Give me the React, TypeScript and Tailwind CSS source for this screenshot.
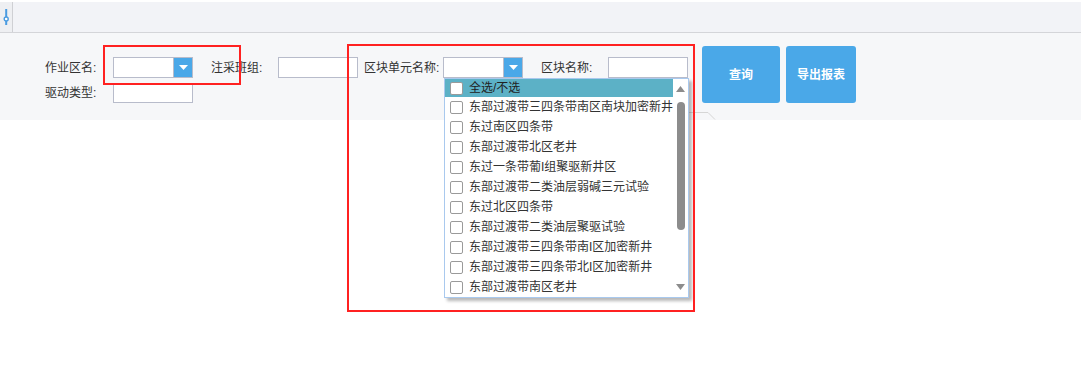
import React from "react";

const items = [
  "东部过渡带三四条带南区南块加密新井",
  "东过南区四条带",
  "东部过渡带北区老井",
  "东过一条带葡I组聚驱新井区",
  "东部过渡带二类油层弱碱三元试验",
  "东过北区四条带",
  "东部过渡带二类油层聚驱试验",
  "东部过渡带三四条带南I区加密新井",
  "东部过渡带三四条带北I区加密新井",
  "东部过渡带南区老井",
];

function Arrow() {
  return (
    <div className="w-[19px] h-full bg-[#4aa8e8] border-l border-[#b8bccb] flex items-center justify-center">
      <svg width="9" height="5" viewBox="0 0 9 5">
        <path d="M0 0 L9 0 L4.5 5 Z" fill="#fff" />
      </svg>
    </div>
  );
}

function Select() {
  return (
    <div className="w-[80px] h-[21px] border border-[#b8bccb] bg-white flex justify-end">
      <Arrow />
    </div>
  );
}

function Input() {
  return <div className="w-[80px] h-[21px] border border-[#b8bccb] bg-white" />;
}

function Checkbox() {
  return <div className="w-[13px] h-[13px] border border-[#9a9a9a] rounded-[2px] bg-white shrink-0" />;
}

export default function App() {
  return (
    <div className="relative w-[1081px] h-[371px] bg-white text-[12px] text-[#333] font-['Liberation_Sans','Noto_Sans_CJK_SC',sans-serif] overflow-hidden">
      {/* toolbar */}
      <div className="h-[33px] pt-[2px] bg-white">
        <div className="h-[31px] flex bg-[#f2f3f7] border-b border-[#d4d5d9]">
          <div className="w-[13px] h-full bg-[#eeeff2] border-r border-[#cfd0d4] flex items-center justify-center">
            <svg width="6" height="16" viewBox="0 0 6 16">
              <rect x="2.2" y="0" width="2" height="16" fill="#4a9be0" />
              <circle cx="3.2" cy="10" r="2" fill="#fff" stroke="#4a9be0" strokeWidth="1.4" />
            </svg>
          </div>
          <div className="flex-1" />
        </div>
      </div>

      {/* form */}
      <div className="h-[87px] bg-[#f6f7f9] pt-[13px] pl-[45px] flex items-start">
        <div className="pt-[11px] flex flex-col gap-[5px]">
          <div className="flex items-center h-[21px]">
            <span className="w-[68px]">作业区名:</span>
            <Select />
            <span className="ml-[18px] w-[67px]">注采班组:</span>
            <Input />
            <span className="ml-[6px] w-[79px]">区块单元名称:</span>
            <Select />
            <span className="ml-[18px] w-[67px]">区块名称:</span>
            <Input />
          </div>
          <div className="flex items-center h-[20px]">
            <span className="w-[68px]">驱动类型:</span>
            <div className="w-[80px] h-[20px] border border-[#b8bccb] bg-white" />
          </div>
        </div>
        <div className="ml-[14px] flex gap-[6px]">
          <button className="w-[78px] h-[57px] bg-[#4aa8e8] rounded-[3px] text-white font-bold text-[12px]">
            查询
          </button>
          <button className="w-[70px] h-[57px] bg-[#4aa8e8] rounded-[3px] text-white font-bold text-[12px]">
            导出报表
          </button>
        </div>
      </div>

      {/* faint tab shape behind dropdown */}
      <svg className="absolute left-[686px] top-[111px]" width="32" height="10" viewBox="0 0 32 10">
        <path d="M0 1.5 L22 1.5 L29 8.5" stroke="#d6d6d6" strokeWidth="1" fill="none" />
      </svg>

      {/* dropdown */}
      <div className="absolute left-[444px] top-[78px] w-[245px] h-[220px] bg-white border border-[#a9c9ee] shadow-[3px_3px_3px_rgba(0,0,0,0.28)] flex">
        <div className="flex-1 flex flex-col">
          <div className="h-[18px] bg-[#5cb1c6] flex items-center pl-[5px] gap-[6px] text-[#222]">
            <Checkbox />
            <span>全选/不选</span>
          </div>
          {items.map((t) => (
            <div key={t} className="h-[20px] flex items-center pl-[5px] gap-[6px] whitespace-nowrap">
              <Checkbox />
              <span>{t}</span>
            </div>
          ))}
        </div>
        <div className="w-[15px] relative">
          <svg className="absolute left-[3px] top-[7px]" width="9" height="6" viewBox="0 0 9 6">
            <path d="M0 6 L9 6 L4.5 0 Z" fill="#8c8c8c" />
          </svg>
          <div className="absolute left-[4px] top-[23px] w-[8px] h-[128px] rounded-[4px] bg-[#8c8c8c]" />
          <svg className="absolute left-[3px] top-[205px]" width="9" height="6" viewBox="0 0 9 6">
            <path d="M0 0 L9 0 L4.5 6 Z" fill="#8c8c8c" />
          </svg>
        </div>
      </div>

      {/* red annotation boxes */}
      <div className="absolute left-[103px] top-[45px] w-[138px] h-[40px] border-2 border-[#ff2121]" />
      <div className="absolute left-[347px] top-[44px] w-[348px] h-[268px] border-2 border-[#ff2121]" />
    </div>
  );
}
